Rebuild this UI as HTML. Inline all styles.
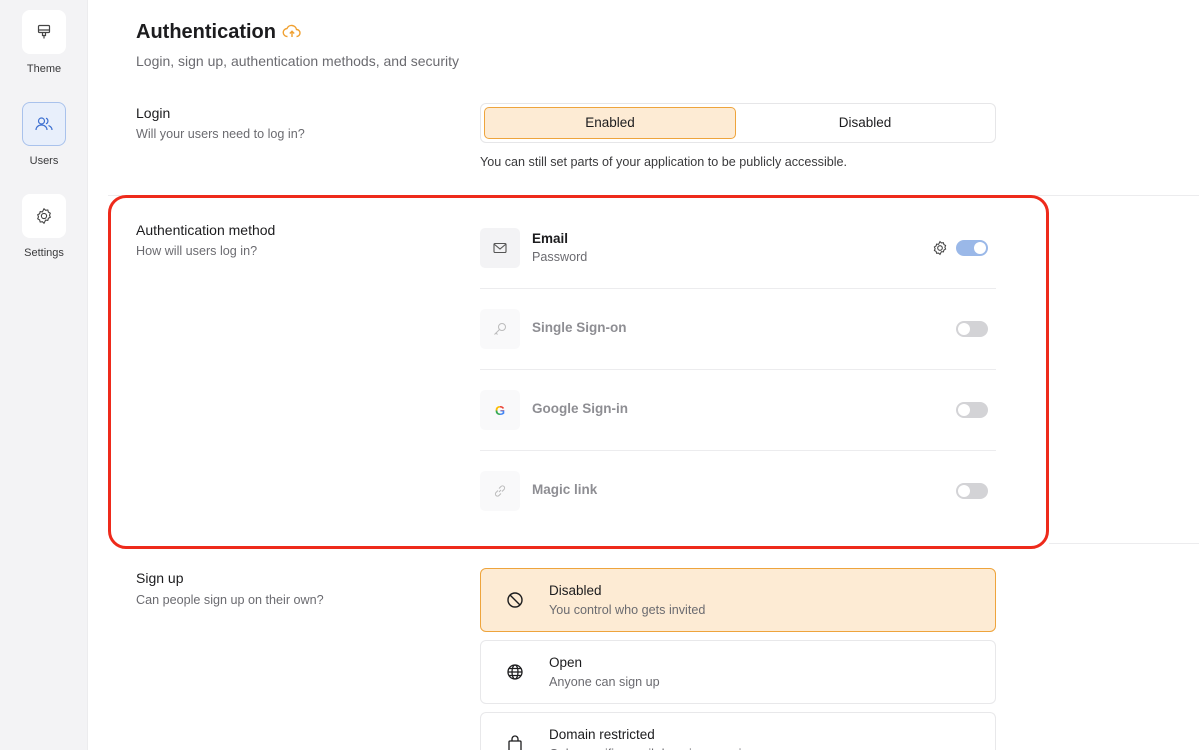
<!DOCTYPE html>
<html style="overflow:hidden;width:1199px;height:750px"><head><meta charset="utf-8"><style>
*{box-sizing:border-box;margin:0;padding:0}
body{width:1199px;height:750px;overflow:hidden;background:#fff;font-family:"Liberation Sans",sans-serif;color:#1c1c1e;position:relative}
.abs{position:absolute}
.side{left:0;top:0;width:88px;height:750px;background:#f3f3f5;border-right:1px solid #ececee}
.tile{left:22px;width:44px;height:44px;border-radius:8px;background:#fff;display:flex;align-items:center;justify-content:center}
.lbl{left:0;width:88px;text-align:center;font-size:11px;color:#3a3a3c}
.t{font-size:13.5px;color:#1c1c1e;white-space:nowrap}
.s{font-size:12.6px;color:#6b6b70;white-space:nowrap}
.hr{height:1px;background:#ececee}
.ib{left:480px;width:40px;height:40px;border-radius:5px;display:flex;align-items:center;justify-content:center}
.tog{left:956px;width:32px;height:16px;border-radius:8px;background:#d3d3d6}
.tog::after{content:"";position:absolute;left:2px;top:2px;width:12px;height:12px;border-radius:50%;background:#fff}
.tog.on{background:#9ab8e8}.tog.on::after{left:18px}
.card{left:480px;width:516px;height:64px;border:1px solid #e8e8ea;border-radius:6px}
</style></head><body>
<div class="abs side"></div>
<div class="abs tile" style="top:10px"><svg width="18" height="18" viewBox="0 0 18 18" fill="none" stroke="#444" stroke-width="1.2"><rect x="3.5" y="2.5" width="11" height="7" rx="1"/><path d="M3.5 7h11M7.5 9.5v3h3v-3M9 12.5v3"/></svg></div>
<div class="abs lbl" style="top:63px">Theme</div>
<div class="abs tile" style="top:102px;background:#e8effb;border:1px solid #a9c2ec"><svg width="20" height="18" viewBox="0 0 20 18" fill="none" stroke="#3c6fd1" stroke-width="1.2"><circle cx="7.5" cy="6" r="3"/><path d="M2 15c0-3 2.5-5 5.5-5s5.5 2 5.5 5"/><path d="M12 3.2a3 3 0 0 1 0 5.6M14.5 10.5c2 .8 3.5 2.3 3.5 4.5"/></svg></div>
<div class="abs lbl" style="top:155px">Users</div>
<div class="abs tile" style="top:194px"><svg width="18" height="18" viewBox="0 0 18 18" fill="none" stroke="#444" stroke-width="1.1"><circle cx="9" cy="9" r="2.6"/><path d="M9 1.8l1.6 1.5 2.2-.3.6 2.1 1.9 1.1-.8 2 .8 2-1.9 1.1-.6 2.1-2.2-.3L9 16.2l-1.6-1.5-2.2.3-.6-2.1-1.9-1.1.8-2-.8-2 1.9-1.1.6-2.1 2.2.3z"/></svg></div>
<div class="abs lbl" style="top:247px">Settings</div>

<div class="abs" style="left:136px;top:21px;font-size:20px;font-weight:bold;color:#1c1c1e;white-space:nowrap">Authentication <svg width="20" height="16" viewBox="0 0 20 16" fill="none" stroke="#f0a030" stroke-width="1.4" style="vertical-align:-1px"><path d="M5.5 13.5a4 4 0 0 1-.5-8 5 5 0 0 1 9.5 1 3.5 3.5 0 0 1 0 7"/><path d="M10 14V8.5M7.8 10.5L10 8.3l2.2 2.2"/></svg></div>
<div class="abs" style="left:136px;top:53px;font-size:14px;color:#6b6b70;white-space:nowrap">Login, sign up, authentication methods, and security</div>

<div class="abs t" style="left:136px;top:105px;font-size:14px">Login</div>
<div class="abs s" style="left:136px;top:127px">Will your users need to log in?</div>
<div class="abs" style="left:480px;top:103px;width:516px;height:40px;border:1px solid #e6e6e8;border-radius:6px"></div>
<div class="abs" style="left:484px;top:107px;width:252px;height:32px;border:1px solid #eea43c;background:#fdebd4;border-radius:5px;font-size:13.5px;text-align:center;line-height:30px">Enabled</div>
<div class="abs" style="left:738px;top:107px;width:254px;height:32px;font-size:13.5px;text-align:center;line-height:32px">Disabled</div>
<div class="abs s" style="left:480px;top:155px;color:#3a3a3c">You can still set parts of your application to be publicly accessible.</div>
<div class="abs hr" style="left:108px;top:195px;width:1091px"></div>

<div class="abs t" style="left:136px;top:222px;font-size:14px">Authentication method</div>
<div class="abs s" style="left:136px;top:244px">How will users log in?</div>

<div class="abs ib" style="top:228px;background:#f3f3f5"><svg width="14" height="12" viewBox="0 0 14 12" fill="none" stroke="#555" stroke-width="1.1"><rect x="1" y="1.5" width="12" height="9" rx="1"/><path d="M1 2l6 5 6-5"/></svg></div>
<div class="abs t" style="left:532px;top:231px;font-weight:bold">Email</div>
<div class="abs s" style="left:532px;top:250px">Password</div>
<svg class="abs" style="left:932px;top:240px" width="16" height="16" viewBox="0 0 18 18" fill="none" stroke="#444" stroke-width="1.2"><circle cx="9" cy="9" r="2.6"/><path d="M9 1.8l1.6 1.5 2.2-.3.6 2.1 1.9 1.1-.8 2 .8 2-1.9 1.1-.6 2.1-2.2-.3L9 16.2l-1.6-1.5-2.2.3-.6-2.1-1.9-1.1.8-2-.8-2 1.9-1.1.6-2.1 2.2.3z"/></svg>
<div class="abs tog on" style="top:240px"></div>
<div class="abs hr" style="left:480px;top:288px;width:516px"></div>

<div class="abs ib" style="top:309px;background:#f9f9fa"><svg width="14" height="14" viewBox="0 0 14 14" fill="none" stroke="#bbb" stroke-width="1"><circle cx="9" cy="5" r="3.5"/><path d="M6.5 7.5L1.5 12.5M3 11l1.5 1.5"/></svg></div>
<div class="abs t" style="left:532px;top:320px;font-weight:bold;color:#8e8e93">Single Sign-on</div>
<div class="abs tog" style="top:321px"></div>
<div class="abs hr" style="left:480px;top:369px;width:516px"></div>

<div class="abs ib" style="top:390px;background:#f9f9fa;font-size:13px;font-weight:bold"><span style="background:conic-gradient(#ea4335 0 25%,#4285f4 25% 50%,#34a853 50% 75%,#fbbc05 75%);-webkit-background-clip:text;color:transparent">G</span></div>
<div class="abs t" style="left:532px;top:401px;font-weight:bold;color:#8e8e93">Google Sign-in</div>
<div class="abs tog" style="top:402px"></div>
<div class="abs hr" style="left:480px;top:450px;width:516px"></div>

<div class="abs ib" style="top:471px;background:#f9f9fa"><svg width="14" height="14" viewBox="0 0 14 14" fill="none" stroke="#bbb" stroke-width="1"><path d="M6 8l2-2M5 6.5L3 8.5a2.1 2.1 0 0 0 3 3L8 9.5M9 7.5l2-2a2.1 2.1 0 0 0-3-3L6 4.5"/></svg></div>
<div class="abs t" style="left:532px;top:482px;font-weight:bold;color:#8e8e93">Magic link</div>
<div class="abs tog" style="top:483px"></div>

<div class="abs" style="left:108px;top:195px;width:941px;height:354px;border:3px solid #ee2a1b;border-radius:18px"></div>
<div class="abs hr" style="left:1049px;top:543px;width:150px"></div>

<div class="abs t" style="left:136px;top:570px;font-size:14px">Sign up</div>
<div class="abs s" style="left:136px;top:593px">Can people sign up on their own?</div>

<div class="abs card" style="top:568px;background:#fdebd4;border-color:#eea43c"></div>
<svg class="abs" style="left:506px;top:591px" width="18" height="18" viewBox="0 0 18 18" fill="none" stroke="#1c1c1e" stroke-width="1.4"><circle cx="9" cy="9" r="7"/><path d="M4 4l10 10"/></svg>
<div class="abs t" style="left:549px;top:583px">Disabled</div>
<div class="abs s" style="left:549px;top:603px">You control who gets invited</div>

<div class="abs card" style="top:640px"></div>
<svg class="abs" style="left:506px;top:663px" width="18" height="18" viewBox="0 0 18 18" fill="none" stroke="#1c1c1e" stroke-width="1.3"><circle cx="9" cy="9" r="7"/><ellipse cx="9" cy="9" rx="3" ry="7"/><path d="M2 9h14M3 5.5h12M3 12.5h12"/></svg>
<div class="abs t" style="left:549px;top:655px">Open</div>
<div class="abs s" style="left:549px;top:675px">Anyone can sign up</div>

<div class="abs card" style="top:712px;height:38px;border-bottom:none;border-radius:6px 6px 0 0"></div>
<svg class="abs" style="left:506px;top:734px" width="18" height="18" viewBox="0 0 18 18" fill="none" stroke="#1c1c1e" stroke-width="1.3"><rect x="3" y="7" width="12" height="10" rx="1"/><path d="M6 7V5a3 3 0 0 1 6 0v2"/></svg>
<div class="abs t" style="left:549px;top:727px">Domain restricted</div>
<div class="abs s" style="left:549px;top:747px">Only specific email domains can sign up</div>
</body></html>
